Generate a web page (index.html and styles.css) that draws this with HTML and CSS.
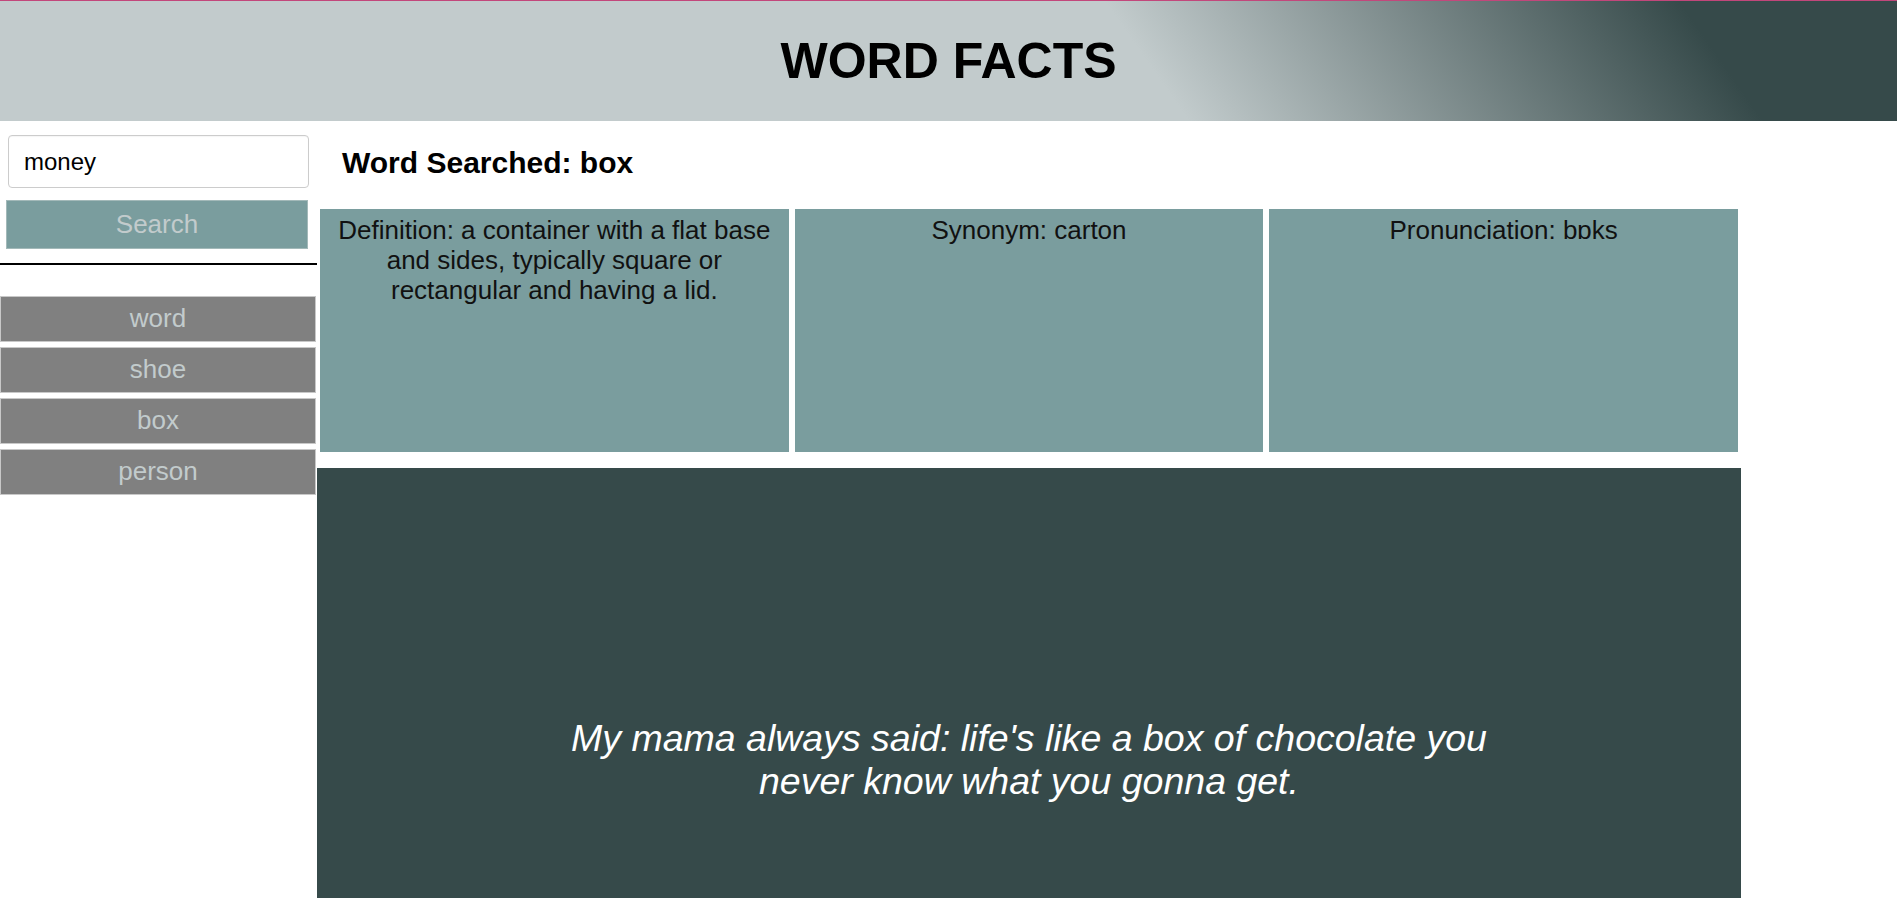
FILE: index.html
```html
<!DOCTYPE html>
<html lang="en">
<head>
<meta charset="utf-8">
<title>Word Facts</title>
<link rel="stylesheet" href="styles.css">
</head>
<body>
<header class="site-header">
  <h1 class="site-title">WORD FACTS</h1>
</header>
<div class="layout">
  <aside class="sidebar">
    <input class="search-input" type="text" value="money">
    <button class="search-btn" type="button">Search</button>
    <hr class="divider">
    <ul class="history">
      <li class="history-item">word</li>
      <li class="history-item">shoe</li>
      <li class="history-item">box</li>
      <li class="history-item">person</li>
    </ul>
  </aside>
  <main class="content">
    <h2 class="searched">Word Searched: box</h2>
    <section class="cards">
      <div class="card">Definition: a container with a flat base and sides, typically square or rectangular and having a lid.</div>
      <div class="card">Synonym: carton</div>
      <div class="card">Pronunciation: bɒks</div>
    </section>
    <section class="quote-box">
      <p class="quote">My mama always said: life's like a box of chocolate you never know what you gonna get.</p>
    </section>
  </main>
</div>
</body>
</html>
```

FILE: styles.css
```css
* { box-sizing: border-box; }

html, body {
  margin: 0;
  padding: 0;
  background: #ffffff;
  font-family: "Liberation Sans", Arial, sans-serif;
  overflow: hidden;
}

.site-header {
  height: 121px;
  border-top: 1px solid #c2477b;
  background: linear-gradient(55deg, #c2cbcc 60%, #364a4a 89%);
  display: flex;
  align-items: center;
  justify-content: center;
}

.site-title {
  margin: 0;
  font-size: 50px;
  font-weight: bold;
  color: #000;
  line-height: normal;
}

.layout {
  display: flex;
  align-items: flex-start;
}

.sidebar {
  width: 317px;
  flex: none;
  padding-top: 14px;
  display: flex;
  flex-direction: column;
}

.search-input {
  width: 301px;
  height: 53px;
  margin: 0 0 0 8px;
  padding: 0 0 0 15px;
  border: 1px solid #cccccc;
  border-radius: 4px;
  font-family: "Liberation Sans", Arial, sans-serif;
  font-size: 24px;
  color: #000;
  background: #fff;
  box-shadow: inset 0 1px 1px rgba(0,0,0,0.04);
}

.search-btn {
  width: 302px;
  height: 49px;
  margin: 12px 0 0 6px;
  padding: 0;
  border: 1px solid #a3b9b9;
  background: #7a9d9e;
  color: #c2cbcc;
  font-family: "Liberation Sans", Arial, sans-serif;
  font-size: 26px;
}

.divider {
  width: 317px;
  height: 2px;
  margin: 14px 0 0 0;
  border: 0;
  background: #000;
}

.history {
  list-style: none;
  margin: 31px 0 0 0;
  padding: 0;
  display: flex;
  flex-direction: column;
  gap: 5px;
}

.history-item {
  width: 316px;
  height: 46px;
  background: #808080;
  border: 1px solid #c8c8c8;
  color: #c2cbcc;
  font-size: 26px;
  display: flex;
  align-items: center;
  justify-content: center;
  padding-bottom: 2px;
}

.content {
  width: 1424px;
  flex: none;
  padding-top: 24px;
  display: flex;
  flex-direction: column;
}

.searched {
  margin: 0 0 0 25px;
  font-size: 30px;
  line-height: 35px;
  font-weight: bold;
  color: #000;
}

.cards {
  margin-top: 29px;
  padding: 0 3px;
  display: grid;
  grid-template-columns: repeat(3, 1fr);
  gap: 6px;
}

.card {
  height: 243px;
  background: #7a9d9e;
  color: #111;
  font-size: 26px;
  line-height: 30px;
  text-align: center;
  padding: 6px 10px 0;
}

.quote-box {
  margin-top: 16px;
  height: 584px;
  background: #364a4a;
  display: flex;
  align-items: center;
  justify-content: center;
}

.quote {
  margin: 0;
  max-width: 960px;
  color: #ffffff;
  font-style: italic;
  font-size: 37.5px;
  line-height: 43px;
  text-align: center;
}
```
